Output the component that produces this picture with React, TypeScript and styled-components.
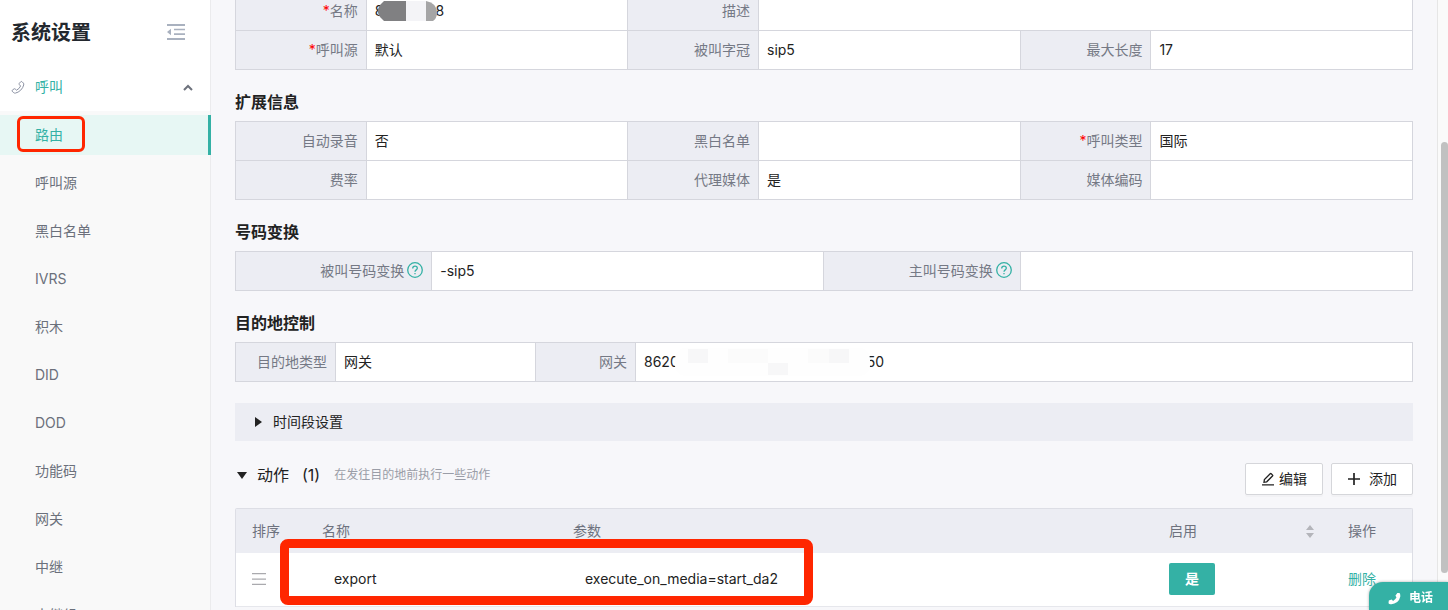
import React from "react";
import styled, { createGlobalStyle, css } from "styled-components";

const teal = "#34b1a5";
const line = "#d5d6dd";
const panel = "#ecedf3";

const GlobalStyle = createGlobalStyle`
  * { box-sizing: border-box; }
  body {
    margin: 0;
    background: #f7f7fa;
    color: #222;
    font: 14px/22px Inter, "Noto Sans CJK SC", sans-serif;
  }
  button { font: inherit; }
  a { text-decoration: none; }
`;

const Page = styled.div`
  display: flex;
  height: 100vh;
  overflow: hidden;
`;

const Sidebar = styled.aside`
  flex: 0 0 211px;
  background: #f9f9f9;
  border-right: 1px solid #ebebed;
`;

const SideHead = styled.div`
  display: flex;
  align-items: center;
  justify-content: space-between;
  height: 63px;
  padding: 0 25px 0 11px;
  background: #fff;
`;

const SideTitle = styled.h1`
  margin: 0;
  padding-top: 2px;
  font-size: 20px;
  line-height: 28px;
  font-weight: 600;
  color: #23282e;
`;

const IconButton = styled.button`
  display: flex;
  padding: 0;
  border: 0;
  background: none;
  cursor: pointer;
`;

const GroupButton = styled.button`
  display: flex;
  align-items: center;
  width: 100%;
  height: 48px;
  padding: 0 17px 0 11px;
  border: 0;
  background: #fff;
  color: ${teal};
  cursor: pointer;
`;

const GroupName = styled.span`
  flex: 1;
  margin-left: 9px;
  text-align: left;
`;

const Menu = styled.ul`
  display: flex;
  flex-direction: column;
  gap: 8px;
  margin: 4px -1px 0 0;
  padding: 0;
  list-style: none;
`;

const MenuLink = styled.a<{ $active?: boolean }>`
  position: relative;
  display: block;
  padding-left: 35px;
  line-height: 40px;
  color: #6b707b;
  ${(p) =>
    p.$active &&
    css`
      color: ${teal};
      background: #e7f7f4;
      border-right: 3px solid ${teal};
    `}
`;

const MenuMark = styled.span`
  position: absolute;
  left: 17px;
  top: 1px;
  width: 68px;
  height: 36px;
  border: 3px solid #ff2600;
  border-radius: 6px;
`;

const Main = styled.main`
  flex: 1;
  min-width: 0;
  padding: 0 24px;
`;

const InfoTable = styled.table<{ $first?: boolean }>`
  width: 100%;
  margin-top: ${(p) => (p.$first ? "-9px" : "0")};
  table-layout: fixed;
  border-collapse: collapse;
  background: #fff;
`;

const Label = styled.th`
  height: 39px;
  padding: 0 8px;
  border: 1px solid ${line};
  background: ${panel};
  color: #757985;
  font-weight: 400;
  text-align: right;
  white-space: nowrap;
`;

const Value = styled.td`
  height: 39px;
  padding: 0 8px;
  border: 1px solid ${line};
  color: #222;
  white-space: nowrap;
`;

const Required = styled.span`
  color: #f00;
`;

const SectionTitle = styled.h2`
  margin: 20px 0 7px;
  font-size: 16px;
  line-height: 24px;
  font-weight: 600;
  color: #222;
`;

const LabelLine = styled.span`
  display: flex;
  align-items: center;
  justify-content: flex-end;
  gap: 3px;
`;

const ValueLine = styled.span`
  display: flex;
  align-items: center;
`;

const NameMask = styled.svg`
  position: relative;
  margin: 0 -2px 0 -5px;
`;

const NumberMask = styled.svg`
  position: relative;
  margin: 0 -3px 0 -4px;
`;

const Collapse = styled.button`
  display: flex;
  align-items: center;
  gap: 11px;
  width: 100%;
  height: 38px;
  margin-top: 21px;
  padding: 0 20px;
  border: 0;
  background: ${panel};
  color: #222;
  cursor: pointer;
`;

const ActionBar = styled.div`
  display: flex;
  align-items: center;
  gap: 8px;
  margin: 22px 0 13px;
`;

const ActionToggle = styled.button`
  display: flex;
  align-items: center;
  height: 24px;
  margin-bottom: 8px;
  padding: 0 2px;
  border: 0;
  background: none;
  color: #222;
  font-size: 16px;
  cursor: pointer;
`;

const ActionName = styled.span`
  margin: 0 13px 0 10px;
`;

const Hint = styled.span`
  flex: 1;
  margin: 0 0 8px 4px;
  font-size: 12px;
  color: #9a9da7;
`;

const ToolButton = styled.button<{ $gap: number }>`
  display: flex;
  align-items: center;
  gap: ${(p) => p.$gap}px;
  height: 32px;
  padding: 0 15px;
  border: 1px solid #d5d6da;
  border-radius: 2px;
  background: #fff;
  box-shadow: 0 2px 0 rgba(0, 0, 0, 0.02);
  color: #222;
  cursor: pointer;
`;

const TableWrap = styled.div`
  position: relative;
  border: 1px solid #dddee5;
  border-bottom: 0;
  border-radius: 2px 2px 0 0;
`;

const DataTable = styled.table`
  width: 100%;
  table-layout: fixed;
  border-collapse: collapse;
  background: #fff;
`;

const HeadCell = styled.th`
  height: 44px;
  padding: 0 16px;
  background: ${panel};
  color: #6e727e;
  font-weight: 400;
  text-align: left;
`;

const HeadSort = styled.span`
  display: flex;
  align-items: center;
  justify-content: space-between;
  padding-right: 2px;
`;

const Cell = styled.td<{ $indent?: boolean }>`
  height: 53px;
  padding: 0 16px 0 ${(p) => (p.$indent ? 28 : 16)}px;
  border-bottom: 1px solid #e6e7ec;
`;

const EnabledButton = styled.button`
  display: block;
  height: 32px;
  padding: 0 16px;
  border: 0;
  border-radius: 2px;
  background: ${teal};
  color: #fff;
  font-weight: 600;
  cursor: pointer;
`;

const DeleteLink = styled.a`
  color: ${teal};
`;

const RowMark = styled.span`
  position: absolute;
  left: 44px;
  top: 30px;
  width: 533px;
  height: 66px;
  border: 9px solid #ff2600;
  border-radius: 8px;
  pointer-events: none;
`;

const ScrollTrack = styled.div`
  flex: 0 0 11px;
  padding: 142px 0 37px 3px;
  border-left: 1px solid #e6e6e6;
  background: #fafafa;
`;

const ScrollThumb = styled.div`
  height: 100%;
  border-radius: 4px;
  background: #c1c1c1;
`;

const PhoneButton = styled.button`
  position: fixed;
  right: 0;
  bottom: 0;
  display: flex;
  align-items: center;
  gap: 8px;
  height: 28px;
  padding: 4px 15px 0 19px;
  border: 0;
  border-radius: 14px 0 0 0;
  background: ${teal};
  box-shadow: 0 0 3px rgba(0, 0, 0, 0.35);
  color: #fff;
  font-size: 12px;
  font-weight: 600;
  cursor: pointer;
`;

const FoldIcon = () => (
  <svg width="18" height="16" viewBox="0 0 18 16" fill="#a9b1bf" aria-hidden="true">
    <path d="M0 0h18v2H0zM7 4.700h11v1.600H7zM7 9.300h11v1.600H7zM0 14h18v2H0zM0 8l4-3.200v6.400z" />
  </svg>
);

const HandsetIcon = () => (
  <svg width="15" height="15" viewBox="0 0 15 15" fill="none" stroke="#8c92a3" strokeWidth="1" aria-hidden="true">
    <path d="M8.300 3.300 9.800 1.700Q10.400 1.200 11 1.700L12.400 3.100Q13 3.800 12.700 5 12 7.800 9.700 10.200 7.200 12.500 4.400 13.100 3.500 13.300 2.800 12.700L1.200 11.300Q.8 10.800 1.300 10.200L3 8.900Q3.600 8.500 4.200 9L5.500 10.200Q8.300 8.900 9.600 6L8.300 4.600Q7.800 3.900 8.300 3.300Z" />
  </svg>
);

const ChevronUp = () => (
  <svg width="10" height="8" viewBox="0 0 10 8" fill="none" stroke="#6d727c" strokeWidth="2" aria-hidden="true">
    <path d="M1 7 5 3 9 7" />
  </svg>
);

const HelpIcon = () => (
  <svg width="16" height="18" viewBox="0 0 16 18" fill="none" stroke={teal} strokeWidth="1.300" aria-hidden="true">
    <circle cx="8" cy="8" r="7.300" />
    <path d="M5.700 6.500C5.700 5 6.700 4.200 8 4.200S10.300 5 10.300 6.300C10.300 7.900 8 7.900 8 9.700" />
    <path d="M8 10.900v1.300" />
  </svg>
);

const EditIcon = () => (
  <svg width="14" height="14" viewBox="0 0 14 14" fill="none" stroke="#222" strokeWidth="1.300" aria-hidden="true">
    <path d="M1 12.800h12M3 10.200 3.400 7.500 9.200 1.700Q9.700 1.200 10.200 1.700L11.600 3.100Q12 3.500 11.500 4L5.700 9.800Z" />
  </svg>
);

const PlusIcon = () => (
  <svg width="14" height="14" viewBox="0 0 14 14" fill="none" stroke="#222" strokeWidth="1.700" aria-hidden="true">
    <path d="M1 7h12M7 1v12" />
  </svg>
);

const DragIcon = () => (
  <svg width="14" height="12" viewBox="0 0 14 12" fill="#aaaaae" style={{ display: "block" }} aria-hidden="true">
    <path d="M0 0h14v1.300H0zM0 5.400h14v1.300H0zM0 10.700h14V12H0z" />
  </svg>
);

const SortIcon = () => (
  <svg width="8" height="13" viewBox="0 0 8 13" fill="#b4b5ba" aria-hidden="true">
    <path d="M4 0 8 5H0zM0 8h8L4 13z" />
  </svg>
);

const PhoneIcon = () => (
  <svg width="13" height="13" viewBox="0 0 13 13" fill="#fff" aria-hidden="true">
    <path d="M9.300.9 11.600.9Q12.600 2.400 12.300 4.600 11.600 8 9.200 10.100 6.200 12.500 2.600 12.200 1.200 12 .5 11.200L.8 8.600 3.600 7.500 5.100 8.900Q7.500 7.700 8.500 5.300L7.400 3.700Z" />
  </svg>
);

const menu = ["路由", "呼叫源", "黑白名单", "IVRS", "积木", "DID", "DOD", "功能码", "网关", "中继", "中继组"];

const thirds = ["11.11%", "22.22%", "11.11%", "22.28%", "11.06%", "22.22%"];

const Columns = ({ widths }: { widths: (string | undefined)[] }) => (
  <colgroup>
    {widths.map((width, i) => (
      <col key={i} width={width} />
    ))}
  </colgroup>
);

export default function App() {
  return (
    <Page>
      <GlobalStyle />
      <Sidebar>
        <SideHead>
          <SideTitle>系统设置</SideTitle>
          <IconButton aria-label="收起菜单"><FoldIcon /></IconButton>
        </SideHead>
        <GroupButton aria-expanded="true">
          <HandsetIcon />
          <GroupName>呼叫</GroupName>
          <ChevronUp />
        </GroupButton>
        <Menu>
          {menu.map((name, i) => (
            <li key={name}>
              <MenuLink href="#" $active={i === 0}>
                {name}
                {i === 0 && <MenuMark />}
              </MenuLink>
            </li>
          ))}
        </Menu>
      </Sidebar>

      <Main>
        <InfoTable $first>
          <Columns widths={thirds} />
          <tbody>
            <tr>
              <Label scope="row"><Required>*</Required>名称</Label>
              <Value>
                <ValueLine>
                  8
                  <NameMask width="59" height="20" viewBox="0 0 59 20" aria-hidden="true">
                    <path d="M6 0H28V20H6L2 16 0 12V8L2 4Z" fill="#808082" />
                    <path d="M28 0h20v20H28z" fill="#f4f4f7" />
                    <path d="M48 0Q59 2 59 12 59 17 55 20H48Z" fill="#a5a5a6" />
                  </NameMask>
                  8
                </ValueLine>
              </Value>
              <Label scope="row">描述</Label>
              <Value colSpan={3} />
            </tr>
            <tr>
              <Label scope="row"><Required>*</Required>呼叫源</Label>
              <Value>默认</Value>
              <Label scope="row">被叫字冠</Label>
              <Value>sip5</Value>
              <Label scope="row">最大长度</Label>
              <Value>17</Value>
            </tr>
          </tbody>
        </InfoTable>

        <SectionTitle>扩展信息</SectionTitle>
        <InfoTable>
          <Columns widths={thirds} />
          <tbody>
            <tr>
              <Label scope="row">自动录音</Label>
              <Value>否</Value>
              <Label scope="row">黑白名单</Label>
              <Value />
              <Label scope="row"><Required>*</Required>呼叫类型</Label>
              <Value>国际</Value>
            </tr>
            <tr>
              <Label scope="row">费率</Label>
              <Value />
              <Label scope="row">代理媒体</Label>
              <Value>是</Value>
              <Label scope="row">媒体编码</Label>
              <Value />
            </tr>
          </tbody>
        </InfoTable>

        <SectionTitle>号码变换</SectionTitle>
        <InfoTable>
          <Columns widths={["16.67%", "33.33%", "16.67%", "33.33%"]} />
          <tbody>
            <tr>
              <Label scope="row"><LabelLine>被叫号码变换<HelpIcon /></LabelLine></Label>
              <Value>-sip5</Value>
              <Label scope="row"><LabelLine>主叫号码变换<HelpIcon /></LabelLine></Label>
              <Value />
            </tr>
          </tbody>
        </InfoTable>

        <SectionTitle>目的地控制</SectionTitle>
        <InfoTable>
          <Columns widths={["100", "200", "100", undefined]} />
          <tbody>
            <tr>
              <Label scope="row">目的地类型</Label>
              <Value>网关</Value>
              <Label scope="row">网关</Label>
              <Value>
                <ValueLine>
                  8620
                  <NumberMask width="195" height="28" viewBox="0 0 195 28" aria-hidden="true">
                    <rect width="195" height="28" rx="10" fill="#fefefe" />
                    <path d="M13 1h20v14H13zM93 15h20v12H93zM154 1h20v14h-20z" fill="#f7f7f8" />
                    <path d="M53 1h20v14H53zM73 1h20v14H73zM133 1h21v14h-21z" fill="#fbfbfb" />
                  </NumberMask>
                  50
                </ValueLine>
              </Value>
            </tr>
          </tbody>
        </InfoTable>

        <Collapse aria-expanded="false">
          <svg width="7" height="10" viewBox="0 0 7 10" aria-hidden="true"><path d="M0 0 7 5 0 10Z" fill="#222" /></svg>
          时间段设置
        </Collapse>

        <ActionBar>
          <ActionToggle aria-expanded="true">
            <svg width="10" height="7" viewBox="0 0 10 7" aria-hidden="true"><path d="M0 0H10L5 7Z" fill="#222" /></svg>
            <ActionName>动作</ActionName>
            (1)
          </ActionToggle>
          <Hint>在发往目的地前执行一些动作</Hint>
          <ToolButton $gap={4}><EditIcon />编辑</ToolButton>
          <ToolButton $gap={8}><PlusIcon />添加</ToolButton>
        </ActionBar>

        <TableWrap>
          <DataTable>
            <Columns widths={["70", "251", undefined, "179", "80"]} />
            <thead>
              <tr>
                <HeadCell scope="col">排序</HeadCell>
                <HeadCell scope="col">名称</HeadCell>
                <HeadCell scope="col">参数</HeadCell>
                <HeadCell scope="col"><HeadSort>启用<SortIcon /></HeadSort></HeadCell>
                <HeadCell scope="col">操作</HeadCell>
              </tr>
            </thead>
            <tbody>
              <tr>
                <Cell><DragIcon /></Cell>
                <Cell $indent>export</Cell>
                <Cell $indent>execute_on_media=start_da2</Cell>
                <Cell><EnabledButton>是</EnabledButton></Cell>
                <Cell><DeleteLink href="#">删除</DeleteLink></Cell>
              </tr>
            </tbody>
          </DataTable>
          <RowMark />
        </TableWrap>
      </Main>

      <ScrollTrack>
        <ScrollThumb />
      </ScrollTrack>
      <PhoneButton><PhoneIcon />电话</PhoneButton>
    </Page>
  );
}
